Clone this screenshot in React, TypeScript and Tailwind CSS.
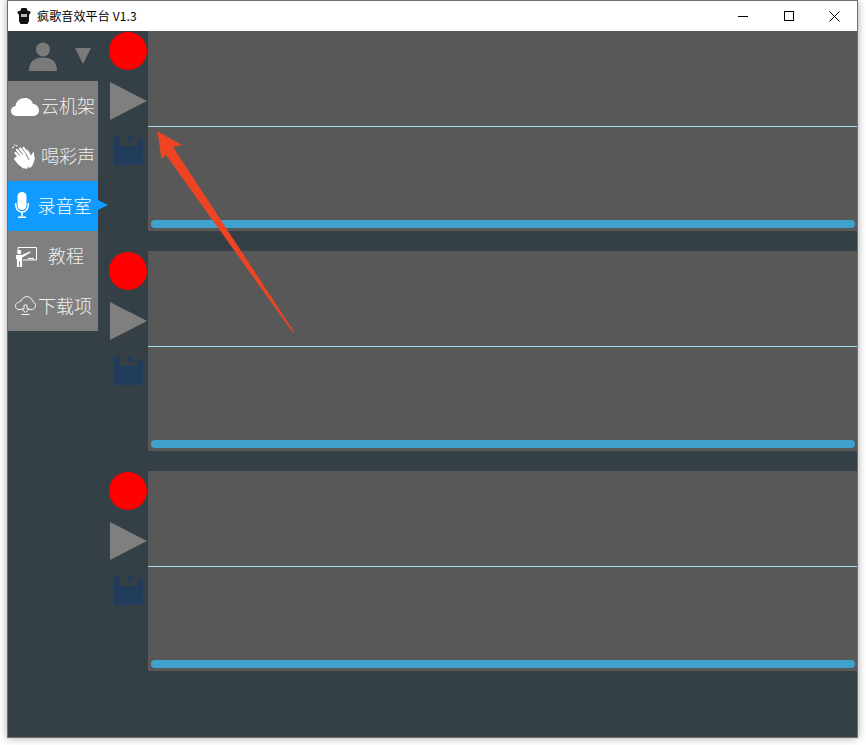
import type { ReactNode } from "react";

const font = { fontFamily: '"Noto Sans CJK SC", "Noto Sans", sans-serif' };

type NavItem = {
  label: string;
  icon: ReactNode;
  active?: boolean;
  textClass: string;
};

const CloudIcon = (
  <svg viewBox="0 0 28 18" className="absolute left-[3px] top-[17px] h-[18px] w-[28px] fill-white">
    <path d="M6 18 C2 18 0 15.5 0 13 C0 10 2 8.5 4.5 8 C5 3 9 0 14 0 C18 0 21 2.5 22 6 C25.5 6 28 9 28 12.5 C28 15.5 25.5 18 22 18 Z" />
  </svg>
);

const HandsIcon = (
  <svg viewBox="0 0 24 25" className="absolute left-[3px] top-[13px] h-[25px] w-[24px] fill-white stroke-white">
    <path d="M1 4 L3 3 M3.5 0.5 L4 2 M6 1 L5.5 2.5" strokeWidth="1" fill="none" />
    <path d="M4.5 9 L11 16 M6 6 L13 14 M9 4.5 L15 12 M12.5 4 L17 10" strokeWidth="2.2" strokeLinecap="round" fill="none" />
    <path d="M8 12 L15 10 L18 14 L18.5 20 L16 24.5 L12 24 L7 20 L3 15 L5 13 Z" strokeWidth="0.5" />
    <path d="M16.5 5.5 L20 12 L22.5 8 L23.5 15 L21 22 L18 24 Z" strokeWidth="0.5" />
    <path d="M15 10 L18 16" stroke="#7f7f7f" strokeWidth="1" fill="none" />
  </svg>
);

const MicIcon = (
  <svg viewBox="0 0 14 26" className="absolute left-[7px] top-[11px] h-[26px] w-[14px] fill-none stroke-white">
    <rect x="2.5" y="0" width="9" height="18" rx="4.5" fill="white" stroke="none" />
    <path d="M0.8 11 V13 C0.8 17 3.5 20 7 20 S13.2 17 13.2 13 V11" strokeWidth="1.5" />
    <path d="M7 20 V25 M3 25.2 H11" strokeWidth="1.5" />
  </svg>
);

const TeacherIcon = (
  <svg viewBox="0 0 21 20" className="absolute left-[8px] top-[16px] h-[20px] w-[21px] fill-white stroke-white">
    <path d="M2 3 V0.5 H20.5 V13 H7" fill="none" strokeWidth="1" />
    <path d="M12 11.5 H18" strokeWidth="1.2" />
    <circle cx="3.2" cy="5" r="2.2" stroke="none" />
    <path d="M0 8 H6 L14 4.5 L14.5 5.5 L6 10.5 V20 H4 V14 H3 V20 H1 V12 H0 Z" strokeWidth="0.2" />
  </svg>
);

const CloudDownIcon = (
  <svg viewBox="0 0 21 19" className="absolute left-[7px] top-[15px] h-[19px] w-[21px] fill-none stroke-[#f2f2f2]">
    <path
      d="M6.5 13.5 H4 C1.5 13.5 0.5 12 0.5 10 C0.5 8 2 6.8 3.5 6.5 C4 5.5 5 5 6 5.2 C7 2.5 9 0.6 12 0.6 C15 0.6 17 2.5 17.5 5.5 C19.5 6 20.5 7.7 20.5 9.5 C20.5 12 19 13.5 17 13.5 H14.5"
      strokeWidth="1"
    />
    <path d="M9 9 H12 V13 H14.5 L10.5 16.5 L6.5 13 H9 Z M6.5 18.5 H14.5" strokeWidth="1" />
  </svg>
);

const navItems: NavItem[] = [
  { label: "云机架", icon: CloudIcon, textClass: "pl-[33px]" },
  { label: "喝彩声", icon: HandsIcon, textClass: "pl-[33px]" },
  { label: "录音室", icon: MicIcon, active: true, textClass: "pl-[29.5px]" },
  { label: "教程", icon: TeacherIcon, textClass: "pl-[40px]" },
  { label: "下载项", icon: CloudDownIcon, textClass: "pl-[30px]" },
];

function Sidebar() {
  return (
    <div className="w-[90px] shrink-0">
      <div className="relative h-[50px]">
        <svg viewBox="0 0 28 29" className="absolute left-[21px] top-[11px] h-[29px] w-[28px] fill-[#7a7a7a]">
          <circle cx="14" cy="7.5" r="7" />
          <path d="M0 29 C0 19 6 15.5 14 15.5 S28 19 28 29 Z" />
        </svg>
        <svg viewBox="0 0 16 16" className="absolute left-[67px] top-[17px] h-[16px] w-[16px] fill-[#7a7a7a]">
          <path d="M0 0 H16 L8 16 Z" />
        </svg>
      </div>
      <nav className="bg-[#7f7f7f]">
        {navItems.map((item) => (
          <div
            key={item.label}
            className={`relative flex h-[50px] items-center pb-[2px] text-[18px] ${item.textClass} ${
              item.active ? "bg-[#0f9bff] text-white" : "text-[#f0f0f0]"
            }`}
          >
            {item.icon}
            <span className="font-light">{item.label}</span>
            {item.active && (
              <span className="absolute left-[90px] top-[19px] h-0 w-0 border-y-[5px] border-l-[10px] border-y-transparent border-l-[#0f9bff]" />
            )}
          </div>
        ))}
      </nav>
    </div>
  );
}

function Track() {
  return (
    <div className="flex h-[200px]">
      <div className="flex w-[50px] shrink-0 flex-col items-center pl-[10px]">
        <div className="mt-[1px] h-[38px] w-[38px] rounded-full bg-[#ff0000]" />
        <svg viewBox="0 0 37 38" className="mt-[12px] h-[38px] w-[37px] fill-[#7f7f7f]">
          <path d="M0 0 L37 19 L0 38 Z" />
        </svg>
        <svg viewBox="0 0 29 29" className="mt-[16px] h-[29px] w-[29px]">
          <path d="M0 0 H6 V10 H23 V0 L29 6 V29 H0 Z" fill="#223d5c" />
          <rect x="14" y="0" width="4.5" height="6" fill="#223d5c" />
        </svg>
      </div>
      <div className="flex flex-1 flex-col bg-[#585858]">
        <div className="h-[95px] shrink-0" />
        <div className="h-px shrink-0 bg-[#a4dcf0]" />
        <div className="mt-auto mb-[3px] px-[3px]">
          <div className="mr-[-1px] h-2 rounded-full bg-[#3fa2cc]" />
        </div>
      </div>
    </div>
  );
}

export default function App() {
  return (
    <div className="h-[745px] w-[866px] overflow-hidden bg-white pl-[7px]" style={font}>
      <div className="relative flex h-[738px] w-[851px] flex-col border border-[#707070] shadow-[0_0_8px_rgba(0,0,0,0.35)]">
        <div className="flex h-[30px] shrink-0 items-center bg-white pl-[9px] text-[12px] text-black">
          <svg viewBox="0 0 14 16" className="h-[16px] w-[14px]">
            <path d="M4.5 0 H9.5 L10.5 2.5 L14 4 L12 7 V13 L10.5 16 H3.5 L2 13 V7 L0 4 L3.5 2.5 Z" fill="#111" />
            <rect x="4" y="6" width="6" height="3" fill="#bbb" />
          </svg>
          <span className="ml-[6px] tracking-[0.15px]">疯歌音效平台 V1.3</span>
          <div className="ml-auto flex h-full items-center">
            <div className="flex h-full w-[46px] items-center justify-center">
              <div className="h-px w-[10px] bg-black" />
            </div>
            <div className="flex h-full w-[46px] items-center justify-center">
              <div className="h-[10px] w-[10px] border border-black" />
            </div>
            <div className="flex h-full w-[45px] items-center justify-center">
              <svg viewBox="0 0 11 11" className="h-[11px] w-[11px] stroke-black">
                <path d="M0.5 0.5 L10.5 10.5 M10.5 0.5 L0.5 10.5" />
              </svg>
            </div>
          </div>
        </div>
        <div className="flex flex-1 bg-[#353f46]">
          <Sidebar />
          <div className="flex flex-1 flex-col gap-5">
            <Track />
            <Track />
            <Track />
          </div>
        </div>
        {/* annotation arrow drawn over the screenshot */}
        <svg className="pointer-events-none absolute left-[-1px] top-[-1px] h-[739px] w-[851px]" viewBox="7 0 851 739">
          <path d="M157.5 131.5 L182 145 L173 147 L293.5 331 L292.5 332 L166 155 L161.5 159 Z" fill="#ef4423" />
        </svg>
      </div>
    </div>
  );
}
